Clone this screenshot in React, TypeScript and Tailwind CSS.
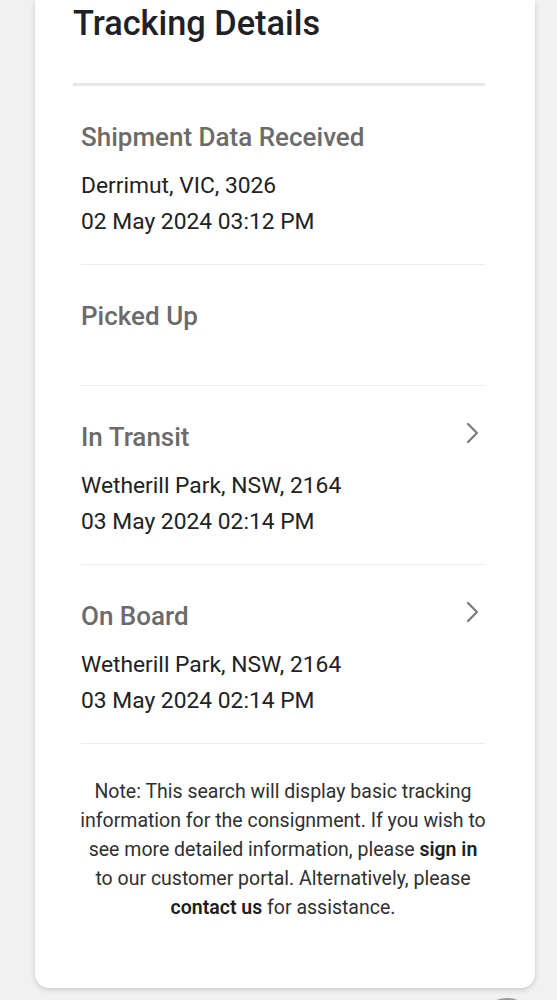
import React from "react";

function Chevron() {
  return (
    <svg width="14" height="22" viewBox="0 0 14 22" fill="none" className="mr-[5px] mb-[8px] shrink-0">
      <polyline points="2,2 11,11 2,20" stroke="#7a7a7a" strokeWidth="2.2" strokeLinecap="round" strokeLinejoin="round" />
    </svg>
  );
}

type Item = { title: string; lines: string[]; chevron?: boolean };

const items: Item[] = [
  { title: "Shipment Data Received", lines: ["Derrimut, VIC, 3026", "02 May 2024 03:12 PM"] },
  { title: "Picked Up", lines: [] },
  { title: "In Transit", lines: ["Wetherill Park, NSW, 2164", "03 May 2024 02:14 PM"], chevron: true },
  { title: "On Board", lines: ["Wetherill Park, NSW, 2164", "03 May 2024 02:14 PM"], chevron: true },
];

export default function App() {
  return (
    <div
      className="relative min-h-screen overflow-hidden bg-[#f1f1f1] pl-[35px]"
      style={{ fontFamily: "Roboto, 'Noto Sans', sans-serif" }}
    >
      <div className="w-[500px] rounded-b-[14px] bg-white pl-[38px] pr-[50px] pb-[66px] shadow-[0_2px_5px_rgba(0,0,0,0.16)]">
        <h1 className="pt-[3px] text-[34.3px] font-medium leading-[40px] text-[#1e2125]">Tracking Details</h1>
        <div className="mt-[40px] h-[3px] bg-[#e6e6e6]" />
        <div className="ml-[8px]">
          {items.map((it) => (
            <div key={it.title} className="border-b border-[#ececec]">
              <div className={it.lines.length ? "pt-[33px] pb-[24px]" : "pt-[33px] pb-[51px]"}>
                <div className="flex items-center justify-between">
                  <div className="text-[26px] font-medium leading-[36px] text-[#6b6b6b]">{it.title}</div>
                  {it.chevron && <Chevron />}
                </div>
                {it.lines.length > 0 && (
                  <div className="mt-[13px] text-[22.8px] leading-[36px] text-[#222222]">
                    {it.lines.map((l) => (
                      <div key={l}>{l}</div>
                    ))}
                  </div>
                )}
              </div>
            </div>
          ))}
          <div className="-mx-[10px] pt-[33px] text-center text-[19.5px] leading-[29px] text-[#303030]">
            <div className="whitespace-nowrap">Note: This search will display basic tracking</div>
            <div className="whitespace-nowrap">information for the consignment. If you wish to</div>
            <div className="whitespace-nowrap">
              see more detailed information, please <span className="font-semibold text-[#1e1e1e]">sign in</span>
            </div>
            <div className="whitespace-nowrap">to our customer portal. Alternatively, please</div>
            <div className="whitespace-nowrap">
              <span className="font-semibold text-[#1e1e1e]">contact us</span> for assistance.
            </div>
          </div>
        </div>
      </div>
      <div className="absolute left-[479px] top-[998px] h-[56px] w-[56px] rounded-full border-2 border-[#9a9a9a] bg-[#4a4a4a]" />
    </div>
  );
}
